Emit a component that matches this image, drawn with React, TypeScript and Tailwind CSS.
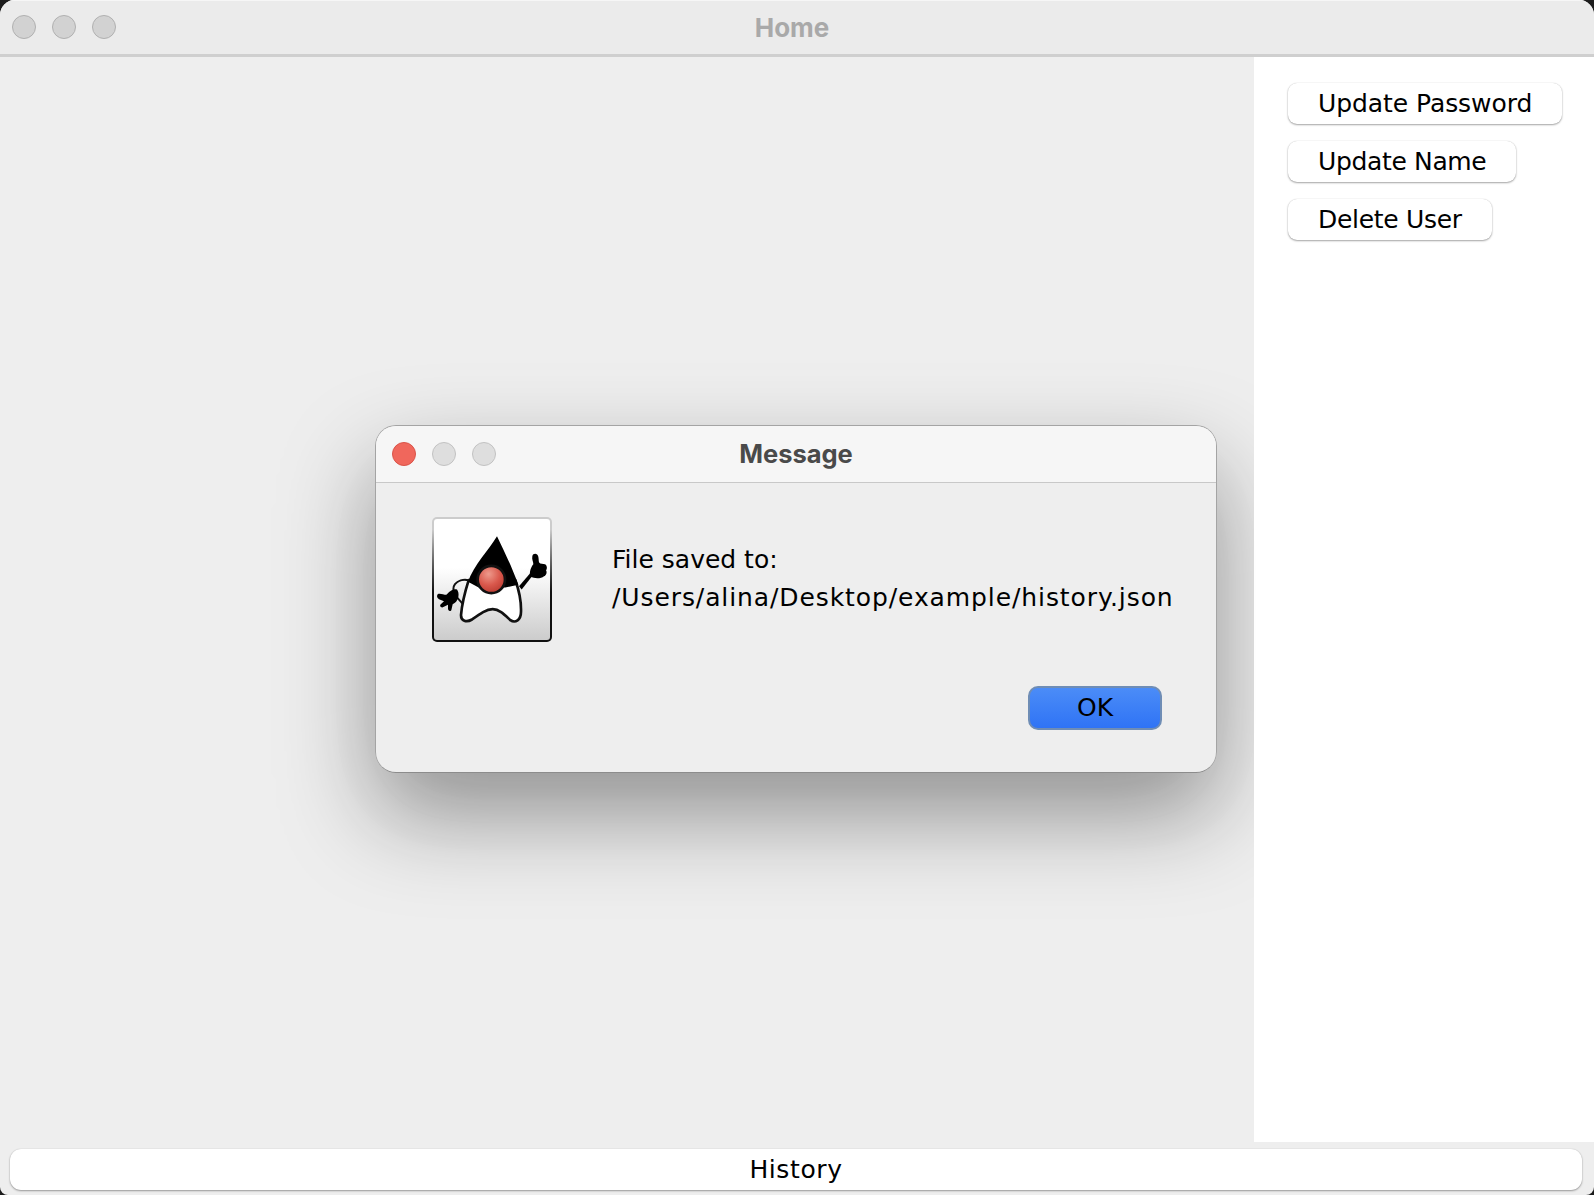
const font = "font-['DejaVu_Sans',sans-serif]";

function Light({ color }: { color: string }) {
  return <div className={`h-6 w-6 rounded-full border ${color}`} />;
}

function SideButton({ label, width, tracking }: { label: string; width: string; tracking: string }) {
  return (
    <button className={`h-[41px] ${width} ${tracking} rounded-[9px] bg-white pl-[30px] text-left text-[25px] leading-none text-black shadow-[0_1px_2px_rgba(0,0,0,0.35),0_0_1px_rgba(0,0,0,0.2)]`}>
      {label}
    </button>
  );
}

// Duke, the Java mascot
function Duke() {
  return (
    <svg viewBox="41 58 348 360" className="h-full w-full">
      <defs>
        <radialGradient id="nose" cx="0.4" cy="0.3" r="0.75">
          <stop offset="0" stopColor="#ee9a8c" />
          <stop offset="0.55" stopColor="#d9584c" />
          <stop offset="1" stopColor="#b83a30" />
        </radialGradient>
      </defs>
      <path d="M145 240 C134 275 124 320 122 345 C122 362 138 368 155 358 C180 340 198 327 217 327 C238 327 254 345 270 360 C285 370 302 360 302 335 C303 300 296 270 285 240 Z" fill="#fff" stroke="#111" strokeWidth="8" strokeLinejoin="round" />
      <path d="M230 108 C205 150 160 195 143 245 L175 262 L255 262 L294 254 C275 200 250 150 230 108 Z" fill="#000" />
      <circle cx="213" cy="238" r="41" fill="url(#nose)" stroke="#111" strokeWidth="8" />
      <path d="M296 258 L332 216 L340 222 L304 268 Z" fill="#000" />
      <path d="M336 168 C338 158 352 158 354 170 C356 180 354 188 360 190 L374 192 C381 196 381 206 377 210 C381 216 378 226 371 228 C362 236 344 236 330 230 C326 216 332 200 339 192 C339 184 334 178 336 168 Z" fill="#000" />
      <path d="M145 240 C128 236 112 242 104 252 C96 262 100 276 106 286 C112 296 122 304 128 312" stroke="#111" strokeWidth="6" fill="none" />
      <path d="M52 282 C58 278 70 284 78 284 C86 276 96 264 110 268 C118 278 116 298 104 308 L97 312 L93 330 C89 335 83 332 83 325 L83 314 L66 322 C59 322 57 315 63 311 L71 303 L56 297 C49 293 49 286 52 282 Z" fill="#000" />
    </svg>
  );
}

export default function App() {
  return (
    <div className={`${font} h-[1195px] w-[1594px] overflow-hidden bg-[#1c1c1c]`}>
      <div className="relative flex h-full flex-col overflow-hidden rounded-t-[15px] rounded-b-[8px] bg-[#eeeeee]">
        {/* Home window title bar */}
        <header className="relative flex h-[57px] shrink-0 items-center border-b-[3px] border-[#cfcfcf] bg-[#ebebeb] pb-[1px] pl-3 shadow-[inset_0_1px_0_#f6f6f6]">
          <div className="flex gap-4">
            <Light color="border-[#b0b0b0] bg-[#d2d2d2]" />
            <Light color="border-[#b0b0b0] bg-[#d2d2d2]" />
            <Light color="border-[#b0b0b0] bg-[#d2d2d2]" />
          </div>
          <h1 className="absolute inset-x-0 pr-[10px] pt-[1px] text-center font-['Inter',sans-serif] text-[26px] font-bold text-[#a9a9a9]">Home</h1>
        </header>

        <div className="flex min-h-0 flex-1">
          {/* the dialog's shadow falls on this pane and stops at the sidebar */}
          <main className="relative flex-1 overflow-hidden">
            <div className="absolute left-[375px] top-[368px] h-[348px] w-[842px] rounded-[21px] shadow-[0_42px_95px_rgba(0,0,0,0.38)]" />
          </main>
          <aside className="flex w-[340px] flex-col items-start gap-[17px] bg-white pl-[34px] pt-[26px]">
            <SideButton label="Update Password" width="w-[274px]" tracking="tracking-[-0.07px]" />
            <SideButton label="Update Name" width="w-[228px]" tracking="tracking-[-0.35px]" />
            <SideButton label="Delete User" width="w-[204px]" tracking="tracking-[-0.3px]" />
          </aside>
        </div>

        <footer className="flex h-[53px] shrink-0 pb-[5px] pl-[10px] pr-[12px] pt-[7px]">
          <button className="w-full rounded-[11px] bg-white text-[25px] leading-none tracking-[0.6px] text-black shadow-[0_1px_2px_rgba(0,0,0,0.35),0_0_1px_rgba(0,0,0,0.2)]">History</button>
        </footer>

        {/* Message dialog */}
        <div className="absolute left-[375px] top-[425px] flex h-[348px] w-[842px] flex-col overflow-hidden rounded-[21px] border border-[#a4a4a4] border-b-[#8c8c8c] bg-[#eeeeee] shadow-[0_38px_95px_rgba(0,0,0,0.02)]">
          <div className="relative flex h-[57px] shrink-0 items-center gap-4 border-b border-[#c8c8c8] bg-[#f6f6f6] pl-[16px]">
            <Light color="border-[#d95449] bg-[#f0675c]" />
            <Light color="border-[#c2c2c2] bg-[#dedede]" />
            <Light color="border-[#c2c2c2] bg-[#dedede]" />
            <h2 className="absolute inset-x-0 text-center font-['Inter',sans-serif] text-[25.5px] font-bold text-[#4a4a4a]">Message</h2>
          </div>
          <div className="relative flex-1">
            <div className="flex pl-[56px] pt-[34px]">
              <div className="h-[125px] w-[120px] rounded-[5px] bg-gradient-to-b from-[#cccccc] from-10% to-[#111111] to-60% p-[2px]">
                <div className="h-full w-full overflow-hidden rounded-[3px] bg-gradient-to-b from-white from-40% to-[#cccccc]">
                  <Duke />
                </div>
              </div>
              <p className="ml-[60px] pt-[24px] text-[25px] leading-[38px] text-black">
                File saved to:
                <br />
                <span className="tracking-[0.9px]">/Users/alina/Desktop/example/history.json</span>
              </p>
            </div>
            <button className="absolute bottom-[42px] right-[54px] h-[44px] w-[134px] rounded-[10px] border-2 border-[#6f8db5] bg-gradient-to-b from-[#4b8cf7] to-[#2f73f5] pb-[2px] text-[25px] leading-none text-black">
              OK
            </button>
          </div>
        </div>
      </div>
    </div>
  );
}
